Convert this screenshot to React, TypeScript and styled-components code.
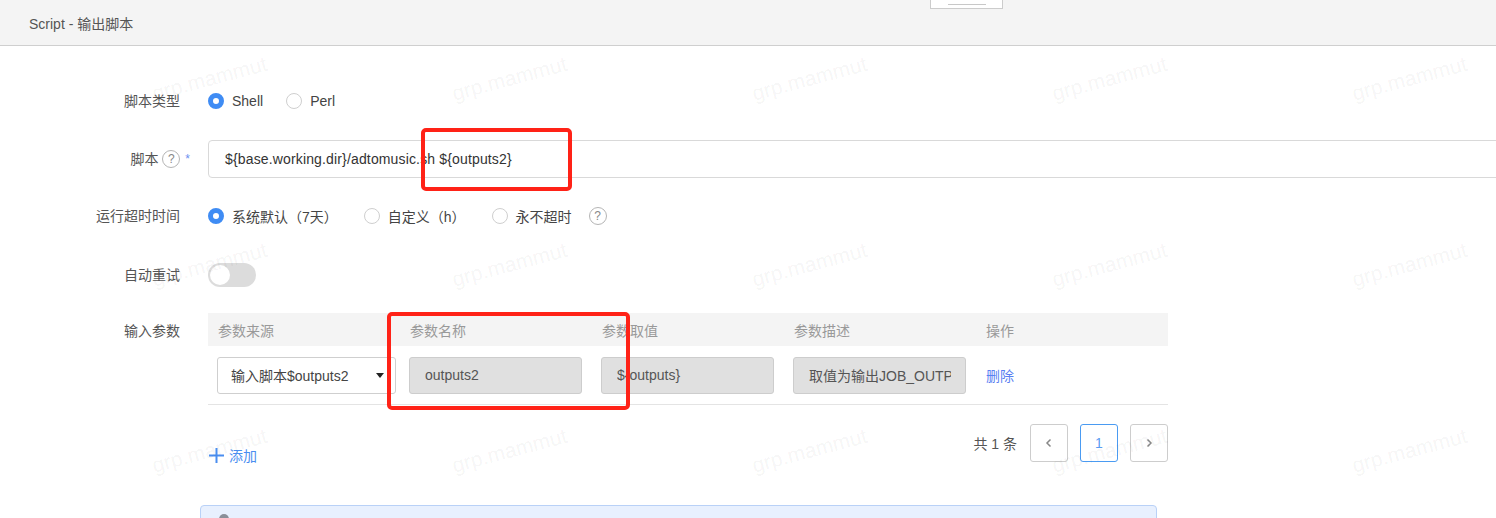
import React from "react";
import styled, { createGlobalStyle } from "styled-components";

const Global = createGlobalStyle`
  html, body { margin: 0; padding: 0; background: #fff; }
  body { font-family: "Liberation Sans", Arial, "Noto Sans CJK SC", sans-serif; font-size: 14px; color: #555; }
  * { box-sizing: border-box; }
`;

const Page = styled.div`
  position: relative;
  width: 1496px;
  height: 518px;
  overflow: hidden;
  background: #fff;
`;

const Header = styled.div`
  position: relative;
  height: 46px;
  background: #f4f4f4;
  border-bottom: 1px solid #cfcfcf;
  display: flex;
  align-items: center;
  padding-left: 29px;
  font-size: 14px;
  color: #555;
`;

const Handle = styled.div`
  position: absolute;
  left: 930px;
  top: -2px;
  width: 73px;
  height: 11px;
  background: #fff;
  border: 1px solid #cccccc;
  display: flex;
  justify-content: center;
  padding-top: 5px;
  &::after {
    content: "";
    width: 38px;
    height: 1px;
    background: #c8c8c8;
  }
`;

const Form = styled.div`
  display: flex;
  flex-direction: column;
  padding-top: 36px;
`;

const Row = styled.div<{ $gap?: number; $top?: boolean }>`
  display: flex;
  align-items: ${(p) => (p.$top ? "flex-start" : "center")};
  min-height: 38px;
  margin-bottom: ${(p) => p.$gap ?? 19}px;
`;

const Label = styled.div<{ $lh?: number }>`
  width: 180px;
  flex: none;
  display: flex;
  justify-content: flex-end;
  align-items: center;
  color: #555;
  font-size: 14px;
  line-height: ${(p) => p.$lh ?? 18}px;
`;

const Control = styled.div`
  margin-left: 28px;
  display: flex;
  align-items: center;
  flex: 1;
  min-width: 0;
`;

const RadioItem = styled.label<{ $mr?: number }>`
  display: flex;
  align-items: center;
  margin-right: ${(p) => p.$mr ?? 23}px;
  color: #444;
  font-size: 14px;
`;

const RadioDot = styled.span<{ $on?: boolean }>`
  width: 16px;
  height: 16px;
  border-radius: 50%;
  background: #fff;
  border: ${(p) => (p.$on ? "5px solid #3f8cf4" : "1px solid #cfcfcf")};
  margin-right: 8px;
  flex: none;
`;

const Help = styled.span`
  width: 18px;
  height: 18px;
  border-radius: 50%;
  border: 1px solid #b5b5b5;
  color: #888;
  font-size: 12px;
  display: inline-flex;
  align-items: center;
  justify-content: center;
  flex: none;
`;

const Star = styled.span`
  color: #6b8ff0;
  margin-left: 5px;
  margin-right: -10px;
  font-size: 12px;
`;

const TextInput = styled.div`
  height: 38px;
  flex: 1;
  margin-right: -20px;
  border: 1px solid #d9d9d9;
  border-radius: 4px;
  display: flex;
  align-items: center;
  padding-left: 16px;
  color: #333;
  font-size: 14px;
  letter-spacing: 0.15px;
`;

const Switch = styled.span`
  width: 48px;
  height: 24px;
  border-radius: 12px;
  background: #dcdcdc;
  display: flex;
  align-items: center;
  padding-left: 2px;
  &::after {
    content: "";
    width: 20px;
    height: 20px;
    border-radius: 50%;
    background: #fff;
  }
`;

const TableWrap = styled.div`
  width: 960px;
  display: flex;
  flex-direction: column;
`;

const TRow = styled.div<{ $head?: boolean }>`
  display: grid;
  grid-template-columns: repeat(5, 192px);
  align-items: center;
  height: ${(p) => (p.$head ? 33 : 59)}px;
  background: ${(p) => (p.$head ? "#f4f4f4" : "#fff")};
  border-bottom: ${(p) => (p.$head ? "none" : "1px solid #e4e4e4")};
`;

const Th = styled.div`
  padding-left: 10px;
  color: #999;
  font-size: 14px;
`;

const Td = styled.div`
  padding-left: 9px;
  display: flex;
  align-items: center;
`;

const Select = styled.div`
  width: 179px;
  height: 37px;
  border: 1px solid #cfcfcf;
  border-radius: 3px;
  display: flex;
  align-items: center;
  justify-content: space-between;
  padding: 0 11px 0 13px;
  color: #444;
  font-size: 14px;
  &::after {
    content: "";
    border-left: 4px solid transparent;
    border-right: 4px solid transparent;
    border-top: 5px solid #222;
  }
`;

const Disabled = styled.div`
  width: 173px;
  height: 37px;
  border: 1px solid #cdcdcd;
  border-radius: 3px;
  background: #e0e0e0;
  display: flex;
  align-items: center;
  padding: 0 14px 0 15px;
  color: #555;
  font-size: 14px;
`;

const Clip = styled.span`
  flex: 1;
  min-width: 0;
  white-space: nowrap;
  overflow: hidden;
`;

const LinkText = styled.span`
  color: #5a7ff2;
  font-size: 14px;
  padding-left: 1px;
`;

const Footer = styled.div`
  display: flex;
  justify-content: space-between;
  align-items: flex-start;
  margin-top: 19px;
`;

const AddBtn = styled.div`
  display: flex;
  align-items: center;
  margin-top: 21px;
  color: #4a8ef0;
  font-size: 14px;
  gap: 4px;
`;

const Pager = styled.div`
  display: flex;
  align-items: center;
  gap: 12px;
  color: #555;
  font-size: 14px;
`;

const Total = styled.span`
  margin-right: 1px;
`;

const PageBtn = styled.div<{ $active?: boolean }>`
  width: 38px;
  height: 38px;
  border: 1px solid ${(p) => (p.$active ? "#4a9bf2" : "#cdcdcd")};
  border-radius: 3px;
  display: flex;
  align-items: center;
  justify-content: center;
  color: ${(p) => (p.$active ? "#5a9cf2" : "#888")};
  font-size: 14px;
`;

const InfoBox = styled.div`
  margin: 40px 0 0 -8px;
  width: 957px;
  height: 40px;
  background: #e8f0fe;
  border: 1px solid #b9d1f7;
  border-radius: 4px;
  padding: 8px 18px;
  display: flex;
`;

const InfoIcon = styled.span`
  width: 10px;
  height: 10px;
  border-radius: 50%;
  background: #8a8f99;
`;

const Mark = styled.div<{ $l: number; $t: number; $w: number; $h: number }>`
  position: absolute;
  left: ${(p) => p.$l}px;
  top: ${(p) => p.$t}px;
  width: ${(p) => p.$w}px;
  height: ${(p) => p.$h}px;
  border: 4px solid #ff2217;
  border-radius: 5px;
  pointer-events: none;
`;

const WatermarkLayer = styled.div`
  position: absolute;
  left: 0;
  top: 0;
  width: 1700px;
  height: 700px;
  display: grid;
  grid-template-columns: repeat(5, 300px);
  grid-auto-rows: 186px;
  justify-content: start;
  padding: 47px 0 0 190px;
  pointer-events: none;
`;

const WmText = styled.span`
  display: block;
  width: 130px;
  transform: rotate(-15deg);
  transform-origin: left bottom;
  margin-top: 30px;
  font-family: "Liberation Sans", Arial, sans-serif;
  font-size: 21px;
  color: rgba(0, 0, 0, 0.055);
  white-space: nowrap;
`;

const Plus = () => (
  <svg width="17" height="17" viewBox="0 0 17 17">
    <path d="M8.5 1v15M1 8.5h15" stroke="#4a8ef0" strokeWidth="2" />
  </svg>
);

const Chevron = ({ dir }: { dir: "l" | "r" }) => (
  <svg width="8" height="10" viewBox="0 0 8 10">
    <path
      d={dir === "l" ? "M5.5 1.5L2 5l3.5 3.5" : "M2.5 1.5L6 5 2.5 8.5"}
      stroke="#888"
      strokeWidth="1.5"
      fill="none"
    />
  </svg>
);

export default function App() {
  return (
    <Page>
      <Global />
      <Header>
        Script - 输出脚本
        <Handle />
      </Header>
      <Form>
        <Row $gap={20}>
          <Label>脚本类型</Label>
          <Control>
            <RadioItem>
              <RadioDot $on />
              Shell
            </RadioItem>
            <RadioItem>
              <RadioDot />
              Perl
            </RadioItem>
          </Control>
        </Row>
        <Row $gap={19}>
          <Label>
            脚本&nbsp;
            <Help>?</Help>
            <Star>*</Star>
          </Label>
          <Control>
            <TextInput>{"${base.working.dir}/adtomusic.sh ${outputs2}"}</TextInput>
          </Control>
        </Row>
        <Row $gap={21}>
          <Label>运行超时时间</Label>
          <Control>
            <RadioItem $mr={26}>
              <RadioDot $on />
              系统默认（7天）
            </RadioItem>
            <RadioItem $mr={26}>
              <RadioDot />
              自定义（h）
            </RadioItem>
            <RadioItem $mr={17}>
              <RadioDot />
              永不超时
            </RadioItem>
            <Help>?</Help>
          </Control>
        </Row>
        <Row $gap={19}>
          <Label>自动重试</Label>
          <Control>
            <Switch />
          </Control>
        </Row>
        <Row $top $gap={0}>
          <Label $lh={36}>输入参数</Label>
          <Control>
            <TableWrap>
              <TRow $head>
                <Th>参数来源</Th>
                <Th>参数名称</Th>
                <Th>参数取值</Th>
                <Th>参数描述</Th>
                <Th>操作</Th>
              </TRow>
              <TRow>
                <Td>
                  <Select>输入脚本$outputs2</Select>
                </Td>
                <Td>
                  <Disabled>
                    <Clip>outputs2</Clip>
                  </Disabled>
                </Td>
                <Td>
                  <Disabled>
                    <Clip>{"${outputs}"}</Clip>
                  </Disabled>
                </Td>
                <Td>
                  <Disabled>
                    <Clip>取值为输出JOB_OUTPUTS2</Clip>
                  </Disabled>
                </Td>
                <Td>
                  <LinkText>删除</LinkText>
                </Td>
              </TRow>
              <Footer>
                <AddBtn>
                  <Plus />
                  添加
                </AddBtn>
                <Pager>
                  <Total>共 1 条</Total>
                  <PageBtn>
                    <Chevron dir="l" />
                  </PageBtn>
                  <PageBtn $active>1</PageBtn>
                  <PageBtn>
                    <Chevron dir="r" />
                  </PageBtn>
                </Pager>
              </Footer>
              <InfoBox>
                <InfoIcon />
              </InfoBox>
            </TableWrap>
          </Control>
        </Row>
      </Form>
      <WatermarkLayer>
        {Array.from({ length: 15 }).map((_, i) => (
          <WmText key={i}>grp.mammut</WmText>
        ))}
      </WatermarkLayer>
      <Mark $l={421} $t={128} $w={151} $h={63} />
      <Mark $l={387} $t={312} $w={243} $h={98} />
    </Page>
  );
}
